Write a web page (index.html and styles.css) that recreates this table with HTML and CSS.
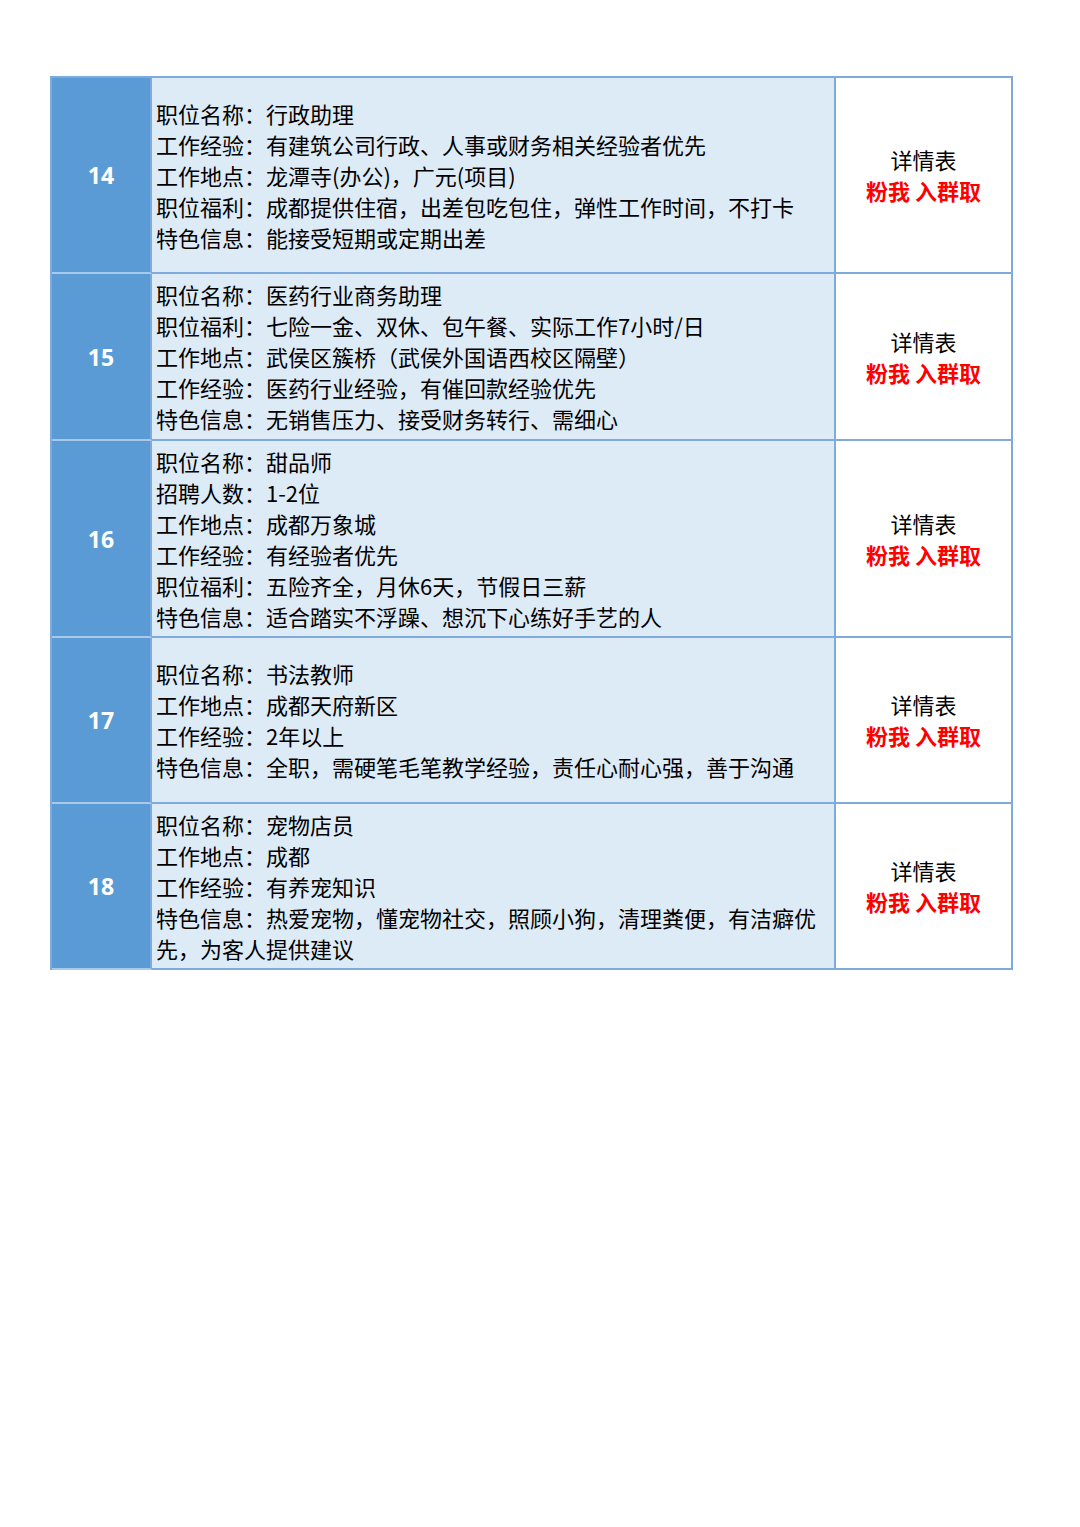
FILE: index.html
```html
<!DOCTYPE html>
<html lang="zh-CN">
<head>
<meta charset="utf-8">
<link rel="stylesheet" href="styles.css">
</head>
<body>
<div class="sheet">
  <div class="num">14</div>
  <div class="info">
    <div>职位名称：行政助理</div>
    <div>工作经验：有建筑公司行政、人事或财务相关经验者优先</div>
    <div>工作地点：龙潭寺(办公)，广元(项目)</div>
    <div>职位福利：成都提供住宿，出差包吃包住，弹性工作时间，不打卡</div>
    <div>特色信息：能接受短期或定期出差</div>
  </div>
  <div class="act"><div>详情表</div><div class="red">粉我 入群取</div></div>

  <div class="num">15</div>
  <div class="info">
    <div>职位名称：医药行业商务助理</div>
    <div>职位福利：七险一金、双休、包午餐、实际工作7小时/日</div>
    <div>工作地点：武侯区簇桥（武侯外国语西校区隔壁）</div>
    <div>工作经验：医药行业经验，有催回款经验优先</div>
    <div>特色信息：无销售压力、接受财务转行、需细心</div>
  </div>
  <div class="act"><div>详情表</div><div class="red">粉我 入群取</div></div>

  <div class="num">16</div>
  <div class="info">
    <div>职位名称：甜品师</div>
    <div>招聘人数：1-2位</div>
    <div>工作地点：成都万象城</div>
    <div>工作经验：有经验者优先</div>
    <div>职位福利：五险齐全，月休6天，节假日三薪</div>
    <div>特色信息：适合踏实不浮躁、想沉下心练好手艺的人</div>
  </div>
  <div class="act"><div>详情表</div><div class="red">粉我 入群取</div></div>

  <div class="num">17</div>
  <div class="info">
    <div>职位名称：书法教师</div>
    <div>工作地点：成都天府新区</div>
    <div>工作经验：2年以上</div>
    <div>特色信息：全职，需硬笔毛笔教学经验，责任心耐心强，善于沟通</div>
  </div>
  <div class="act"><div>详情表</div><div class="red">粉我 入群取</div></div>

  <div class="num">18</div>
  <div class="info">
    <div>职位名称：宠物店员</div>
    <div>工作地点：成都</div>
    <div>工作经验：有养宠知识</div>
    <div>特色信息：热爱宠物，懂宠物社交，照顾小狗，清理粪便，有洁癖优先，为客人提供建议</div>
  </div>
  <div class="act"><div>详情表</div><div class="red">粉我 入群取</div></div>
</div>
</body>
</html>
```
FILE: styles.css
```css
html, body {
  margin: 0;
  padding: 0;
  background: #ffffff;
}
body {
  font-family: "Noto Sans CJK SC", "Noto Sans", sans-serif;
  color: #000000;
}
.sheet {
  display: grid;
  grid-template-columns: 100px 684px 177px;
  grid-template-rows: 196px 167px 197px 166px 166px;
  width: 961px;
  margin: 76px 0 0 50px;
  border-top: 2px solid #7fabdc;
  border-left: 2px solid #7fabdc;
}
.sheet > div {
  box-sizing: border-box;
  border-right: 2px solid #7fabdc;
  border-bottom: 2px solid #7fabdc;
}
.num {
  background: #5b9bd5;
  color: #ffffff;
  font-family: "Open Sans", "Noto Sans", sans-serif;
  font-weight: 700;
  font-size: 23px;
  display: flex;
  align-items: center;
  justify-content: center;
  border-bottom-color: #a9c9ea !important;
}
.info {
  background: #ddebf7;
  font-size: 22px;
  line-height: 31px;
  padding: 0 4px 0 4px;
  display: flex;
  flex-direction: column;
  justify-content: center;
}
.act {
  background: #ffffff;
  font-size: 22px;
  line-height: 31px;
  display: flex;
  flex-direction: column;
  align-items: center;
  justify-content: center;
  text-align: center;
}
.red {
  color: #ff0000;
  font-weight: 700;
}
```
